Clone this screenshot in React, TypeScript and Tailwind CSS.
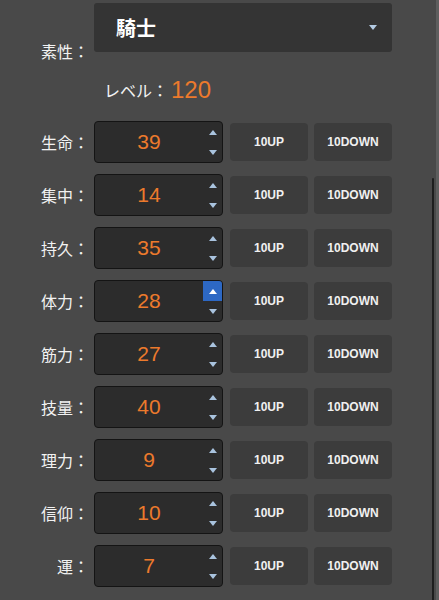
import React from 'react';

const STATS = [
  { label: '生命：', value: 39 },
  { label: '集中：', value: 14 },
  { label: '持久：', value: 35 },
  { label: '体力：', value: 28, active: true },
  { label: '筋力：', value: 27 },
  { label: '技量：', value: 40 },
  { label: '理力：', value: 9 },
  { label: '信仰：', value: 10 },
  { label: '運：', value: 7 },
];

function Spinner({ active }: { active?: boolean }) {
  return (
    <div className="flex h-full w-[19px] flex-col">
      <div
        className={
          'flex flex-1 items-center justify-center rounded-tr-[3px] ' +
          (active ? 'bg-[#2d68c4]' : '')
        }
      >
        <svg width="8" height="5" viewBox="0 0 8 5">
          <path d="M0 5 L4 0 L8 5 Z" fill={active ? '#ffffff' : '#a9c3de'} />
        </svg>
      </div>
      <div className="flex flex-1 items-center justify-center">
        <svg width="8" height="5" viewBox="0 0 8 5">
          <path d="M0 0 L8 0 L4 5 Z" fill="#a9c3de" />
        </svg>
      </div>
    </div>
  );
}

function StatRow({ label, value, active }: { label: string; value: number; active?: boolean }) {
  return (
    <div className="flex h-[42px] items-center">
      <div className="w-[89px] text-right text-[16px] leading-[24px] text-[#f2f2f2]">{label}</div>
      <div className="ml-[5px] flex h-[42px] w-[129px] items-center rounded-[4px] border border-[#141414] bg-[#2c2c2c]">
        <div className="flex-1 text-center font-['Liberation_Sans',sans-serif] text-[21px] text-[#ec7a2c]">
          {value}
        </div>
        <Spinner active={active} />
      </div>
      <button className="ml-[7px] h-[38px] w-[78px] rounded-[4px] bg-[#3c3c3c] font-['Liberation_Sans',sans-serif] text-[12px] font-bold text-[#f0f0f0]">
        10UP
      </button>
      <button className="ml-[6px] h-[38px] w-[78px] rounded-[4px] bg-[#3c3c3c] font-['Liberation_Sans',sans-serif] text-[12px] font-bold text-[#f0f0f0]">
        10DOWN
      </button>
    </div>
  );
}

export default function App() {
  return (
    <div className="relative h-[600px] w-[439px] overflow-hidden bg-[#494949] font-['Noto_Sans_CJK_JP','Noto_Sans',sans-serif]">
      <div className="flex flex-col pt-[3px]">
        {/* 素性 */}
        <div className="flex h-[49px] items-start">
          <div className="mt-[36px] w-[89px] text-right text-[16px] leading-[24px] text-[#f2f2f2]">素性：</div>
          <div className="ml-[5px] flex h-[49px] w-[298px] items-center rounded-[3px] bg-[#343434] pl-[22px] pr-[15px]">
            <span className="flex-1 text-[20px] font-bold text-white">騎士</span>
            <svg width="8" height="5" viewBox="0 0 8 5">
              <path d="M0 0 L8 0 L4 5 Z" fill="#b4cbe3" />
            </svg>
          </div>
        </div>

        {/* レベル */}
        <div className="mt-[23px] flex h-[30px] items-center pl-[104px]">
          <span className="text-[16px] leading-[20px] text-[#f2f2f2]">レベル：</span>
          <span className="ml-[3px] font-['Liberation_Sans',sans-serif] text-[24px] leading-[26px] text-[#ec7a2c]">120</span>
        </div>

        <div className="mt-[16px] flex flex-col gap-[11px]">
          {STATS.map((s) => (
            <StatRow key={s.label} label={s.label} value={s.value} active={s.active} />
          ))}
        </div>
      </div>

      {/* scrollbar */}
      <div className="absolute right-[5px] top-[178px] h-[430px] w-[2px] rounded-full bg-[#1e1e1e]" />
      <div className="absolute right-0 top-0 h-full w-[3px] bg-[#5e5e5e]" />
    </div>
  );
}
